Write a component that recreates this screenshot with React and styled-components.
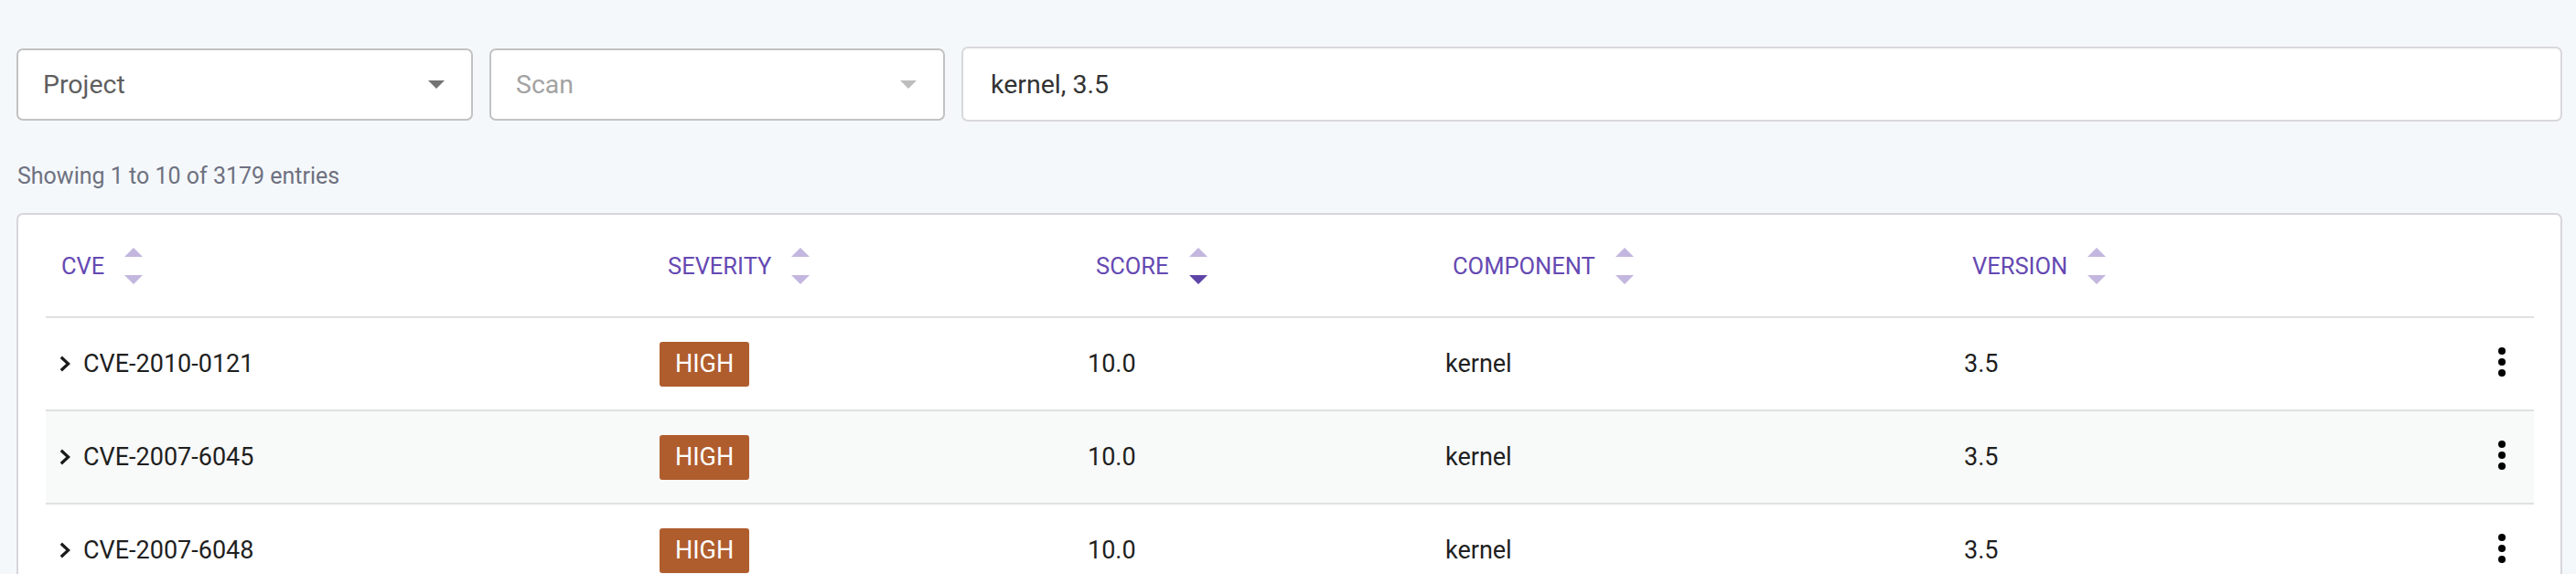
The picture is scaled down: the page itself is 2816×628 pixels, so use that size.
import styled, { createGlobalStyle } from "styled-components";

const GlobalStyle = createGlobalStyle`
  html, body {
    margin: 0;
    padding: 0;
    background: #f5f8fb;
    font-family: Roboto, "Liberation Sans", Arial, sans-serif;
  }
`;

const COLS = "657px 468px 391px 567px 1fr 70px";

const rows = [
  { cve: "CVE-2010-0121", severity: "HIGH", score: "10.0", component: "kernel", version: "3.5" },
  { cve: "CVE-2007-6045", severity: "HIGH", score: "10.0", component: "kernel", version: "3.5" },
  { cve: "CVE-2007-6048", severity: "HIGH", score: "10.0", component: "kernel", version: "3.5" },
];

const columns = [
  { label: "CVE", pad: 17 },
  { label: "SEVERITY", pad: 23 },
  { label: "SCORE", pad: 23, active: "desc" },
  { label: "COMPONENT", pad: 22 },
  { label: "VERSION", pad: 23 },
];

const App = () => {
  return (
    <Page>
      <GlobalStyle />
      <Filters>
        <Select>
          <span>Project</span>
          <Caret />
        </Select>
        <Select $disabled>
          <span>Scan</span>
          <Caret $disabled />
        </Select>
        <Search defaultValue="kernel, 3.5" />
      </Filters>

      <Count>Showing 1 to 10 of 3179 entries</Count>

      <Card>
        <HeaderRow>
          {columns.map((c) => (
            <HeadCell key={c.label} $pad={c.pad}>
              {c.label}
              <SortIcon>
                <Tri $active={c.active === "asc"} />
                <Tri $down $active={c.active === "desc"} />
              </SortIcon>
            </HeadCell>
          ))}
          <HeadCell />
        </HeaderRow>
        {rows.map((r, i) => (
          <Row key={r.cve} $striped={i % 2 === 1}>
            <Cell>
              <Chevron viewBox="0 0 12 18">
                <path d="M1.8 1.8 L9.6 9 L1.8 16.2" />
              </Chevron>
              {r.cve}
            </Cell>
            <Cell>
              <Badge>{r.severity}</Badge>
            </Cell>
            <Cell>{r.score}</Cell>
            <Cell>{r.component}</Cell>
            <Cell>{r.version}</Cell>
            <ActionCell>
              <Kebab>
                <i />
                <i />
                <i />
              </Kebab>
            </ActionCell>
          </Row>
        ))}
      </Card>
    </Page>
  );
};

export default App;

const Page = styled.div`
  padding: 51px 15px 0 18px;
  height: 628px;
  box-sizing: border-box;
  overflow: hidden;
`;

const Filters = styled.div`
  display: flex;
  align-items: center;
  gap: 18px;
`;

const Select = styled.div`
  box-sizing: border-box;
  width: ${(p) => (p.$disabled ? "498px" : "499px")};
  height: 79px;
  display: flex;
  align-items: center;
  justify-content: space-between;
  padding: 0 29px 0 27px;
  background: #fff;
  border: 2px solid #c2c2c2;
  border-radius: 7px;
  font-size: 28.5px;
  color: ${(p) => (p.$disabled ? "#a3a3a3" : "#5f5f5f")};
`;

const Caret = styled.span`
  width: 0;
  height: 0;
  border-left: 9.5px solid transparent;
  border-right: 9.5px solid transparent;
  border-top: 9px solid ${(p) => (p.$disabled ? "#bdbdbd" : "#737373")};
`;

const Search = styled.input`
  flex: 1;
  box-sizing: border-box;
  height: 82px;
  padding: 0 30px;
  background: #fff;
  border: 2px solid #d8d8dc;
  border-radius: 7px;
  font-family: inherit;
  font-size: 28.5px;
  color: #333;
  outline: none;
`;

const Count = styled.div`
  margin: 45px 0 25px 1px;
  font-size: 25px;
  line-height: 30px;
  color: #6e7180;
`;

const Card = styled.div`
  background: #fff;
  border: 2px solid #d6d6db;
  border-radius: 7px;
  padding: 0 29px 0 30px;
`;

const HeaderRow = styled.div`
  display: grid;
  grid-template-columns: ${COLS};
  height: 111px;
  border-bottom: 2px solid #e0e0e0;
`;

const HeadCell = styled.div`
  display: flex;
  align-items: center;
  gap: 22px;
  padding-left: ${(p) => p.$pad || 0}px;
  font-size: 25.5px;
  color: #6549b2;
`;

const SortIcon = styled.span`
  display: flex;
  flex-direction: column;
  gap: 20px;
`;

const Tri = styled.span`
  width: 0;
  height: 0;
  border-left: 10px solid transparent;
  border-right: 10px solid transparent;
  ${(p) =>
    p.$down
      ? `border-top: 10px solid ${p.$active ? "#5e44a6" : "#c3b7df"};`
      : `border-bottom: 10px solid ${p.$active ? "#5e44a6" : "#c3b7df"};`}
`;

const Row = styled.div`
  display: grid;
  grid-template-columns: ${COLS};
  height: 100px;
  border-bottom: 2px solid #e0e0e0;
  background: ${(p) => (p.$striped ? "#f8f9f9" : "#fff")};
`;

const Cell = styled.div`
  display: flex;
  align-items: center;
  padding-left: 14px;
  font-size: 27px;
  color: #1f1f1f;
`;

const ActionCell = styled.div`
  display: flex;
  align-items: center;
  justify-content: center;
`;

const Chevron = styled.svg`
  width: 12px;
  height: 18px;
  margin: 0 14px 0 1px;
  fill: none;
  stroke: #1a1a1a;
  stroke-width: 3.2;
`;

const Badge = styled.span`
  display: inline-flex;
  align-items: center;
  height: 49px;
  padding: 0 17px;
  border-radius: 3px;
  background: #b05d2e;
  color: #fff;
  font-size: 27px;
`;

const Kebab = styled.span`
  display: flex;
  flex-direction: column;
  gap: 4px;
  margin-top: -4px;
  i {
    width: 8px;
    height: 8px;
    border-radius: 50%;
    background: #000;
  }
`;
